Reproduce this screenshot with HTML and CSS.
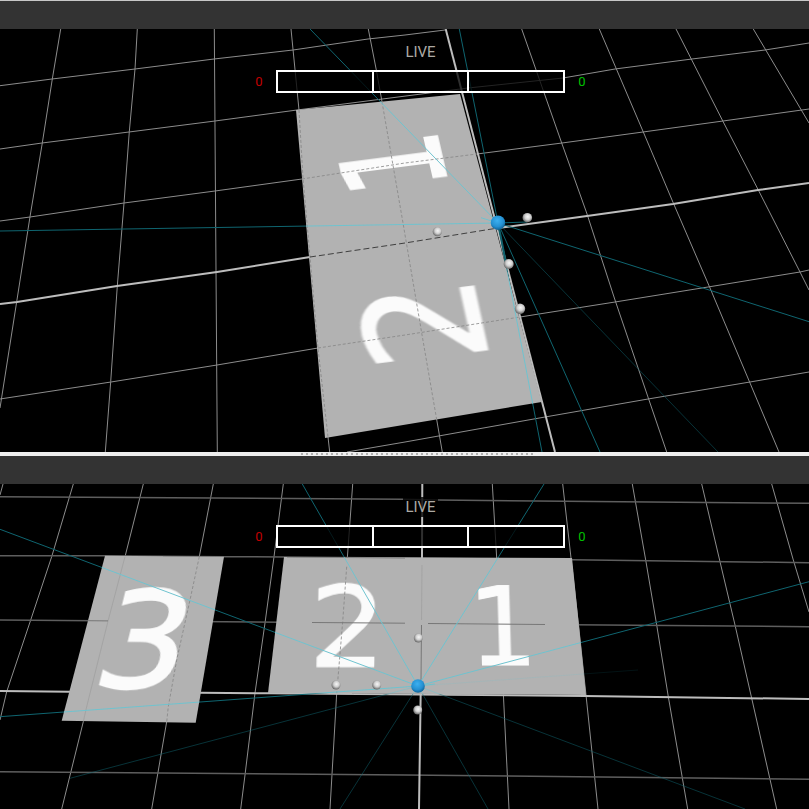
FILE: index.html
```html
<!DOCTYPE html>
<html lang="en">
<head>
  <meta charset="UTF-8">
  <meta name="viewport" content="width=device-width, initial-scale=1.0">
  <title>Live View</title>
  <link rel="stylesheet" href="styles.css">
</head>
<body>
  <div class="app">
    <!-- top viewport -->
    <section class="view view-top">
      <div class="toolbar"></div>
      <div class="canvas">
        <svg class="scene" viewBox="0 29 809 423" preserveAspectRatio="none">
          <defs>
            <radialGradient id="knob" cx="55%" cy="40%" r="60%">
              <stop offset="0" stop-color="#f6f6f6"/>
              <stop offset="0.5" stop-color="#d0d0d0"/>
              <stop offset="1" stop-color="#666"/>
            </radialGradient>
            <radialGradient id="ball" cx="45%" cy="35%" r="65%">
              <stop offset="0" stop-color="#3cb0f0"/>
              <stop offset="0.65" stop-color="#2490d2"/>
              <stop offset="1" stop-color="#106294"/>
            </radialGradient>
            <clipPath id="top-plate-clip">
              <polygon points="296,110 460,94 541.7,402 325,438"/>
            </clipPath>
            <clipPath id="bottom-plate-clip">
              <polygon points="105,555.7 224,556.7 195.7,722.7 61.7,720.7"/>
              <polygon points="284,557 572,558 586,695 268,693"/>
            </clipPath>
            <g id="top-rays">
              <line x1="310" y1="29" x2="498" y2="223"/>
              <line x1="0" y1="231" x2="498" y2="223"/>
              <line x1="459.3" y1="29" x2="498" y2="223"/>
              <line x1="498" y1="223" x2="527" y2="222"/>
              <line x1="481" y1="217.7" x2="498" y2="223"/>
              <line x1="498" y1="223" x2="809" y2="321.7"/>
              <line x1="498" y1="223" x2="600" y2="452"/>
              <line x1="498" y1="223" x2="542" y2="452"/>
              <line class="ray-dim" x1="498" y1="223" x2="718" y2="452"/>
            </g>
            <g id="bottom-rays">
              <line x1="0" y1="529.3" x2="418" y2="686"/>
              <line x1="0" y1="716.7" x2="418" y2="686"/>
              <line class="ray-dim" x1="70" y1="778.3" x2="418" y2="686"/>
              <line x1="302.3" y1="484" x2="418" y2="686"/>
              <line class="ray-dim" x1="340" y1="809" x2="418" y2="686"/>
              <line x1="544" y1="484" x2="418" y2="686"/>
              <line x1="809" y1="581.7" x2="418" y2="686"/>
              <line class="ray-dim" x1="418" y1="686" x2="745" y2="809"/>
              <line class="ray-dim" x1="418" y1="686" x2="488" y2="809"/>
              <line x1="418" y1="686" x2="435" y2="684"/>
              <line class="ray-faint" x1="418" y1="686" x2="638" y2="670"/>
            </g>
          </defs>

          <g class="grid">
            <polyline points="60.7,29 52.3,79 42.3,143 30,216.7 16.7,301.7 0,408"/>
            <polyline points="137.3,29 135,69 129.3,131.7 124,203 117.3,286 110.7,381.7 105.3,452"/>
            <polyline points="214.3,29 217.3,452"/>
            <polyline points="291,29 299,110 303,178 310,257 318,348 328,437 329.7,452"/>
            <polyline points="368.3,29 376.7,72 381.7,100 403,223 421.7,333 442.3,452"/>
            <polyline points="521.7,29 561.7,143 586.7,213 615,300 648.3,398 666.7,452"/>
            <polyline points="599.3,29 643.3,132 673.3,203 710,288 750,383 779,452"/>
            <polyline points="676,29 723.3,122 758.3,190 800,272 809,290"/>
            <polyline points="753.3,29 809,123"/>
            <polyline points="0,85.7 52,79 135,69 214,59 293,50 368,39 405,35 445,30"/>
            <polyline points="0,149 42,143 129,132 215,121 297,110 468,88 563,78 615,69 692,59 765,50 809,43"/>
            <polyline points="0,221 30,217 124,203 215,191 302,179 405,163 477,154 562,143 643,132 723,121 809,109"/>
            <polyline points="0,399 111,382 217,365 318,348 405,335 520,317 615,302 708,287 800,272 809,270"/>
            <polyline points="347,452 405,442 545,417 648,399 750,382 809,372"/>
          </g>
          <g class="axis">
            <polyline points="445.7,29 555,452"/>
            <polyline points="0,304 17,302 117,286 217,272 310,257 405,243 498,228 587,216 673,204 758,190 809,183"/>
          </g>
          <use href="#top-rays" class="rays"/>

          <polygon class="plate" points="296,110 460,94 541.7,402 325,438"/>
          <text class="digit digit-thick" font-size="100" transform="matrix(-0.214 -0.929 1.36 -0.175 448 187)">1</text>
          <text class="digit" font-size="100" transform="matrix(-0.3 -1.37 1.6 -0.2 489.8 359.6)">2</text>

          <g clip-path="url(#top-plate-clip)">
            <g class="plate-grid">
              <polyline points="299,110 303,178 310,257 318,348 328,437"/>
              <polyline points="376.7,72 381.7,100 403,223 421.7,333 442.3,452"/>
              <polyline points="302,179 405,163 477,154"/>
              <polyline points="318,348 405,335 520,317"/>
            </g>
            <polyline class="plate-axis" points="310,257 405,243 498,228"/>
            <use href="#top-rays" class="rays-lit"/>
          </g>

          <line class="ray-edge" x1="498" y1="223" x2="506" y2="263"/>
          <circle cx="527.3" cy="217.7" r="4.8" fill="url(#knob)"/>
          <circle cx="437.3" cy="231.7" r="4.6" fill="url(#knob)"/>
          <circle cx="508.7" cy="264" r="5" fill="url(#knob)"/>
          <circle cx="520" cy="308.7" r="5.2" fill="url(#knob)"/>
          <circle cx="498" cy="222.7" r="7.2" fill="url(#ball)"/>
        </svg>

        <div class="hud">
          <div class="live">LIVE</div>
          <div class="meter-row">
            <span class="count count-red">0</span>
            <div class="meter">
              <div class="segment"></div>
              <div class="segment"></div>
              <div class="segment"></div>
            </div>
            <span class="count count-green">0</span>
          </div>
        </div>
      </div>
    </section>

    <div class="splitter"><div class="grip"></div></div>

    <!-- bottom viewport -->
    <section class="view view-bottom">
      <div class="toolbar"></div>
      <div class="canvas">
        <svg class="scene" viewBox="0 484 809 325" preserveAspectRatio="none">
          <g class="grid">
            <polyline points="3,484 0,495"/>
            <polyline points="73.3,484 51.7,556.7 30.7,620 6.7,691.7 0,720"/>
            <polyline points="143.3,484 125,556.7 108.3,620 86.7,706.7 83.3,721.7 61.7,809"/>
            <polyline points="213.3,484 199.3,556.7 190,600 176.7,660 168.3,706.7 166.7,721.7 151.7,809"/>
            <polyline points="283.3,484 274,556.7 265,623 255,693 245,775 240.7,809"/>
            <polyline points="352.7,484 346.7,566.7 342.7,621.7 336.7,693.3 330,809"/>
            <polyline points="492.3,484 496.7,558 503.3,693 509,809"/>
            <polyline points="562.7,484 571,558 578.3,623 586,695 598,809"/>
            <polyline points="632.3,484 645.7,560 656.7,625 668.3,696.7 687.7,809"/>
            <polyline points="701.7,484 720,561.7 735,625 751.7,698.3 776.7,809"/>
            <polyline points="771.7,484 793.3,560 809,612"/>
          </g>
          <g class="grid-flat">
            <polyline points="0,496.7 403,499.3 436.7,500 809,503.3"/>
            <polyline points="0,555.7 105,555.7 224,556.7 284,557 572,559.7 809,562.7"/>
            <polyline points="0,620 809,626.7"/>
            <polyline points="0,771.7 405,775 809,779.3"/>
          </g>
          <g class="axis">
            <polyline points="422.3,484 421.7,623 419,809"/>
            <polyline points="0,691 70,691.7 200,692.7 268,693.3 585,696 809,699"/>
          </g>
          <use href="#bottom-rays" class="rays"/>

          <polygon class="plate" points="105,555.7 224,556.7 195.7,722.7 61.7,720.7"/>
          <polygon class="plate" points="284,557 572,558 586,695 268,693"/>
          <text class="digit digit-wide" font-size="100" transform="matrix(1.42 0.01 -0.33 1.33 89 687)">3</text>
          <text class="digit" font-size="100" transform="matrix(1.22 0 -0.02 1.12 308.2 666.7)">2</text>
          <text class="digit" font-size="100" transform="matrix(1.09 0 0.03 1.08 469 665)">1</text>

          <g clip-path="url(#bottom-plate-clip)">
            <g class="plate-grid">
              <polyline points="199.3,556.7 190,600 176.7,660 168.3,706.7 166.7,721.7"/>
              <polyline points="346.7,566.7 342.7,621.7 336.7,693.3"/>
            </g>
            <g class="plate-grid-light">
              <polyline points="125,556.7 108.3,620 86.7,706.7 83.3,721.7"/>
              <polyline points="422,565 421.5,620"/>
            </g>
            <g class="plate-seams">
              <polyline points="163,555.9 217,556.5"/>
              <polyline points="287,557 405,558"/>
              <polyline points="88,620.7 108,620.9"/>
              <polyline points="312,622.5 405,623.2"/>
              <polyline points="428,623.5 545,624.5"/>
              <polyline points="421.5,625 421,682"/>
              <polyline points="352,694 588,695.5"/>
            </g>
            <use href="#bottom-rays" class="rays-lit"/>
          </g>

          <circle cx="418.3" cy="638" r="4.5" fill="url(#knob)"/>
          <circle cx="336" cy="685" r="4.5" fill="url(#knob)"/>
          <circle cx="376.7" cy="685" r="4.5" fill="url(#knob)"/>
          <circle cx="417.7" cy="710" r="4.5" fill="url(#knob)"/>
          <circle cx="418" cy="686" r="6.8" fill="url(#ball)"/>
        </svg>

        <div class="hud">
          <div class="live">LIVE</div>
          <div class="meter-row">
            <span class="count count-red">0</span>
            <div class="meter">
              <div class="segment"></div>
              <div class="segment"></div>
              <div class="segment"></div>
            </div>
            <span class="count count-green">0</span>
          </div>
        </div>
      </div>
    </section>
  </div>
</body>
</html>
```

FILE: styles.css
```css
html, body {
  margin: 0;
  height: 100%;
  background-color: #000;
  overflow: hidden;
}

.app {
  display: flex;
  flex-direction: column;
  height: 100vh;
  border-top: 1px solid #c8c8c8;
  box-sizing: border-box;
  font-family: Roboto, Arial, sans-serif;
}

.view {
  display: flex;
  flex-direction: column;
}

.view-top {
  height: 451px;
}

.view-bottom {
  flex: 1;
}

.toolbar {
  height: 28px;
  flex: none;
  background-color: #333;
}

.canvas {
  position: relative;
  flex: 1;
  overflow: hidden;
  background-color: #000;
}

.scene {
  position: absolute;
  top: 0;
  left: 0;
  width: 100%;
  height: 100%;
}

/* scene strokes */
.grid polyline, .grid-flat polyline, .axis polyline, .plate-grid polyline,
.plate-grid-light polyline, .plate-axis, .plate-seams polyline {
  fill: none;
}

.grid {
  stroke: #8c8c8c;
  stroke-width: 1;
}

.grid-flat {
  stroke: #5e5e5e;
  stroke-width: 1.5;
}

.axis {
  stroke: #bdbdbd;
  stroke-width: 2;
}

.plate {
  fill: #b2b2b2;
}

.plate-grid {
  stroke: #858585;
  stroke-width: 0.8;
  stroke-dasharray: 3 2;
}

.plate-grid-light {
  stroke: #a0a0a0;
  stroke-width: 0.8;
}

.plate-axis {
  stroke: #222;
  stroke-width: 0.8;
  stroke-dasharray: 6 3;
}

.plate-seams {
  stroke: #777;
  stroke-width: 1;
}

.digit {
  font-family: "DejaVu Sans", sans-serif;
  fill: #fbfbfb;
  stroke: #fbfbfb;
  stroke-width: 1;
  filter: blur(0.5px);
}

.digit-thick {
  stroke-width: 2.5;
}

.digit-wide {
  stroke-width: 1.8;
}

.rays {
  stroke: #0f6570;
  stroke-width: 1;
}

.rays-lit {
  stroke: #6fc3cf;
  stroke-width: 1;
}

.ray-dim {
  opacity: 0.5;
}

.ray-faint {
  opacity: 0.18;
}

.ray-edge {
  stroke: #0f5f6a;
  stroke-width: 2;
}

/* overlay */
.hud {
  position: relative;
  display: flex;
  flex-direction: column;
  align-items: center;
  gap: 8px;
  padding: 13px 0 0 32px;
}

.live {
  padding: 2px 2px 1px;
  font-size: 15px;
  line-height: 17px;
  color: #adaaa4;
  background-color: rgba(0, 0, 0, 0.8);
}

.meter-row {
  display: flex;
  align-items: center;
  gap: 13px;
}

.count {
  width: 8px;
  font-size: 13px;
  text-align: center;
}

.count-red {
  color: #c00000;
}

.count-green {
  color: #00c000;
}

.meter {
  display: flex;
  width: 285px;
  height: 19px;
  border: 2px solid #fff;
  background-color: rgba(0, 0, 0, 0.75);
}

.segment {
  flex: 1;
}

.segment + .segment {
  border-left: 2px solid #fff;
}

/* splitter between the two viewports */
.splitter {
  height: 4px;
  flex: none;
  padding-left: 301px;
  background-color: #eee;
}

.grip {
  width: 232px;
  height: 2px;
  margin-top: 1px;
  background: repeating-linear-gradient(90deg, #b0b0b0 0, #b0b0b0 2px, transparent 2px, transparent 5px);
}
```
